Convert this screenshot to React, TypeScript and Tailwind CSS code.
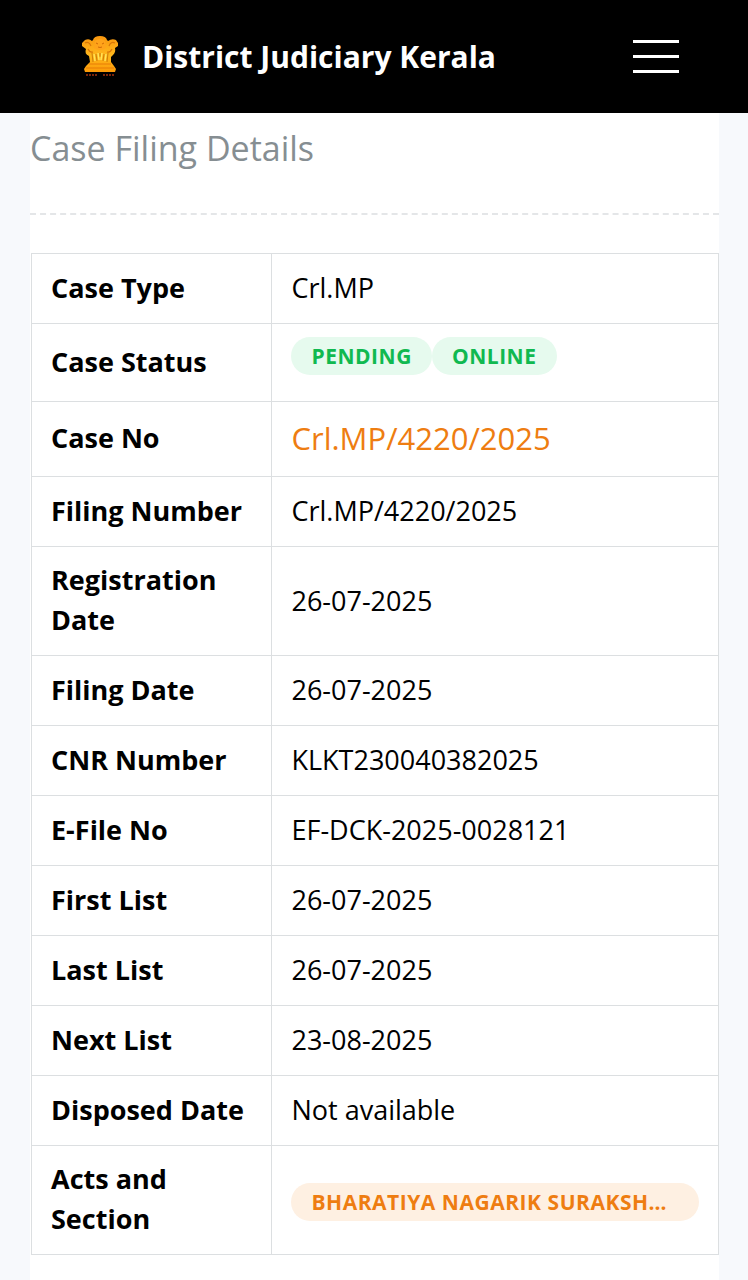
import type { ReactNode } from 'react';

type CaseRow = {
	label: string;
	value: ReactNode;
};

function StatusBadge({ children }: { children: ReactNode }) {
	return (
		<span className="inline-block rounded-full bg-[#e6faee] px-5 text-[21px] leading-[38px] font-bold tracking-wide text-[#10b950] uppercase">
			{children}
		</span>
	);
}

function Emblem() {
	return (
		<svg viewBox="0 0 40 44" className="h-11 w-10" aria-hidden="true">
			<defs>
				<linearGradient id="gold" x1="0" y1="0" x2="0" y2="1">
					<stop offset="0" stopColor="#f8960f" />
					<stop offset="0.55" stopColor="#ffb81c" />
					<stop offset="1" stopColor="#fb9a08" />
				</linearGradient>
			</defs>
			<path
				d="M13 5 Q14 1 20 1 Q26 1 27 5 L28 6 Q32 3 36 5 L38 8 L38 11 L35 13 Q36 17 33 20 L31 22 L31 27 L34 31 L36 34 L35 37 L5 37 L4 34 L6 31 L10 27 L9 21 Q4 19 6 14 L2 11 L2 8 L5 5 Q9 3 12 6 Z"
				fill="url(#gold)"
			/>
			<path d="M15 6 Q20 2 25 6 L26 13 Q20 17 14 13 Z" fill="#ffa31a" />
			<path d="M5 8 Q9 6 11 11 M35 8 Q31 6 29 11 M8 14 Q10 18 13 17 M32 14 Q30 18 27 17" stroke="#d87507" strokeWidth="1.2" fill="none" />
			<path d="M16 8 L18 9 M24 8 L22 9 M18 12 Q20 13 22 12" stroke="#d06c06" strokeWidth="1" fill="none" />
			<path d="M12 18 L13 27 M16 19 L17 26 M20 18 V22 M24 19 L23 26 M28 18 L27 27" stroke="#d0800a" strokeWidth="1.1" />
			<path d="M14 19 L15 26 M18 18 L19 25 M22 18 L21 25 M26 19 L25 26" stroke="#ffe45a" strokeWidth="1.4" />
			<path d="M9 29 H31 M6 33 H34" stroke="#e87d06" strokeWidth="1" />
			<path d="M6 40 H18 M23 40 H34" stroke="#7d2508" strokeWidth="2" strokeDasharray="2 1" />
		</svg>
	);
}

const rows: CaseRow[] = [
	{ label: 'Case Type', value: 'Crl.MP' },
	{
		label: 'Case Status',
		value: (
			<div className="flex pb-[11px]">
				<StatusBadge>Pending</StatusBadge>
				<StatusBadge>Online</StatusBadge>
			</div>
		),
	},
	{
		label: 'Case No',
		value: <div className="text-[31px] leading-[46px] text-[#ee7d11]">Crl.MP/4220/2025</div>,
	},
	{ label: 'Filing Number', value: 'Crl.MP/4220/2025' },
	{ label: 'Registration Date', value: '26-07-2025' },
	{ label: 'Filing Date', value: '26-07-2025' },
	{ label: 'CNR Number', value: 'KLKT230040382025' },
	{ label: 'E-File No', value: 'EF-DCK-2025-0028121' },
	{ label: 'First List', value: '26-07-2025' },
	{ label: 'Last List', value: '26-07-2025' },
	{ label: 'Next List', value: '23-08-2025' },
	{ label: 'Disposed Date', value: 'Not available' },
	{
		label: 'Acts and Section',
		value: (
			<div className="pt-1.5">
				<div className="rounded-full bg-[#fef0e2] px-5 text-[21px] leading-[38px] font-bold tracking-wide text-[#ee7d11] uppercase">
					Bharatiya Nagarik Suraksh…
				</div>
			</div>
		),
	},
];

export default function App() {
	return (
		<div className="min-h-screen bg-[#f7f9fc] font-['Open_Sans',sans-serif] text-black">
			<header className="flex h-[113px] items-center gap-5 bg-black pr-[69px] pl-20">
				<a href="#" className="flex items-center gap-[22px] text-white">
					<Emblem />
					<span className="text-[30px] font-bold whitespace-nowrap">District Judiciary Kerala</span>
				</a>
				<button type="button" aria-label="Open menu" className="ml-auto flex w-[46px] flex-col gap-3">
					<span className="h-[3px] w-full bg-white" />
					<span className="h-[3px] w-full bg-white" />
					<span className="h-[3px] w-full bg-white" />
				</button>
			</header>

			<main className="mr-[29px] ml-[30px] min-h-[1167px] bg-white">
				<h1 className="border-b-2 border-dashed border-[#e4e6e8] pt-[11px] pb-[41px] text-[34px] leading-[48px] text-[#868e92]">
					Case Filing Details
				</h1>

				<div className="pt-[38px] pl-px">
					<table className="w-full table-fixed border-collapse border border-[#dcdfe1] text-[27px]">
						<colgroup>
							<col className="w-[35%]" />
							<col />
						</colgroup>
						<tbody>
							{rows.map((row) => (
								<tr key={row.label}>
									<th scope="row" className="border border-[#dcdfe1] px-[19px] pt-[13px] pb-[15px] text-left leading-10 font-bold">
										{row.label}
									</th>
									<td className="border border-[#dcdfe1] px-[19px] pt-[13px] pb-[15px] leading-[41px]">{row.value}</td>
								</tr>
							))}
						</tbody>
					</table>
				</div>
			</main>
		</div>
	);
}
